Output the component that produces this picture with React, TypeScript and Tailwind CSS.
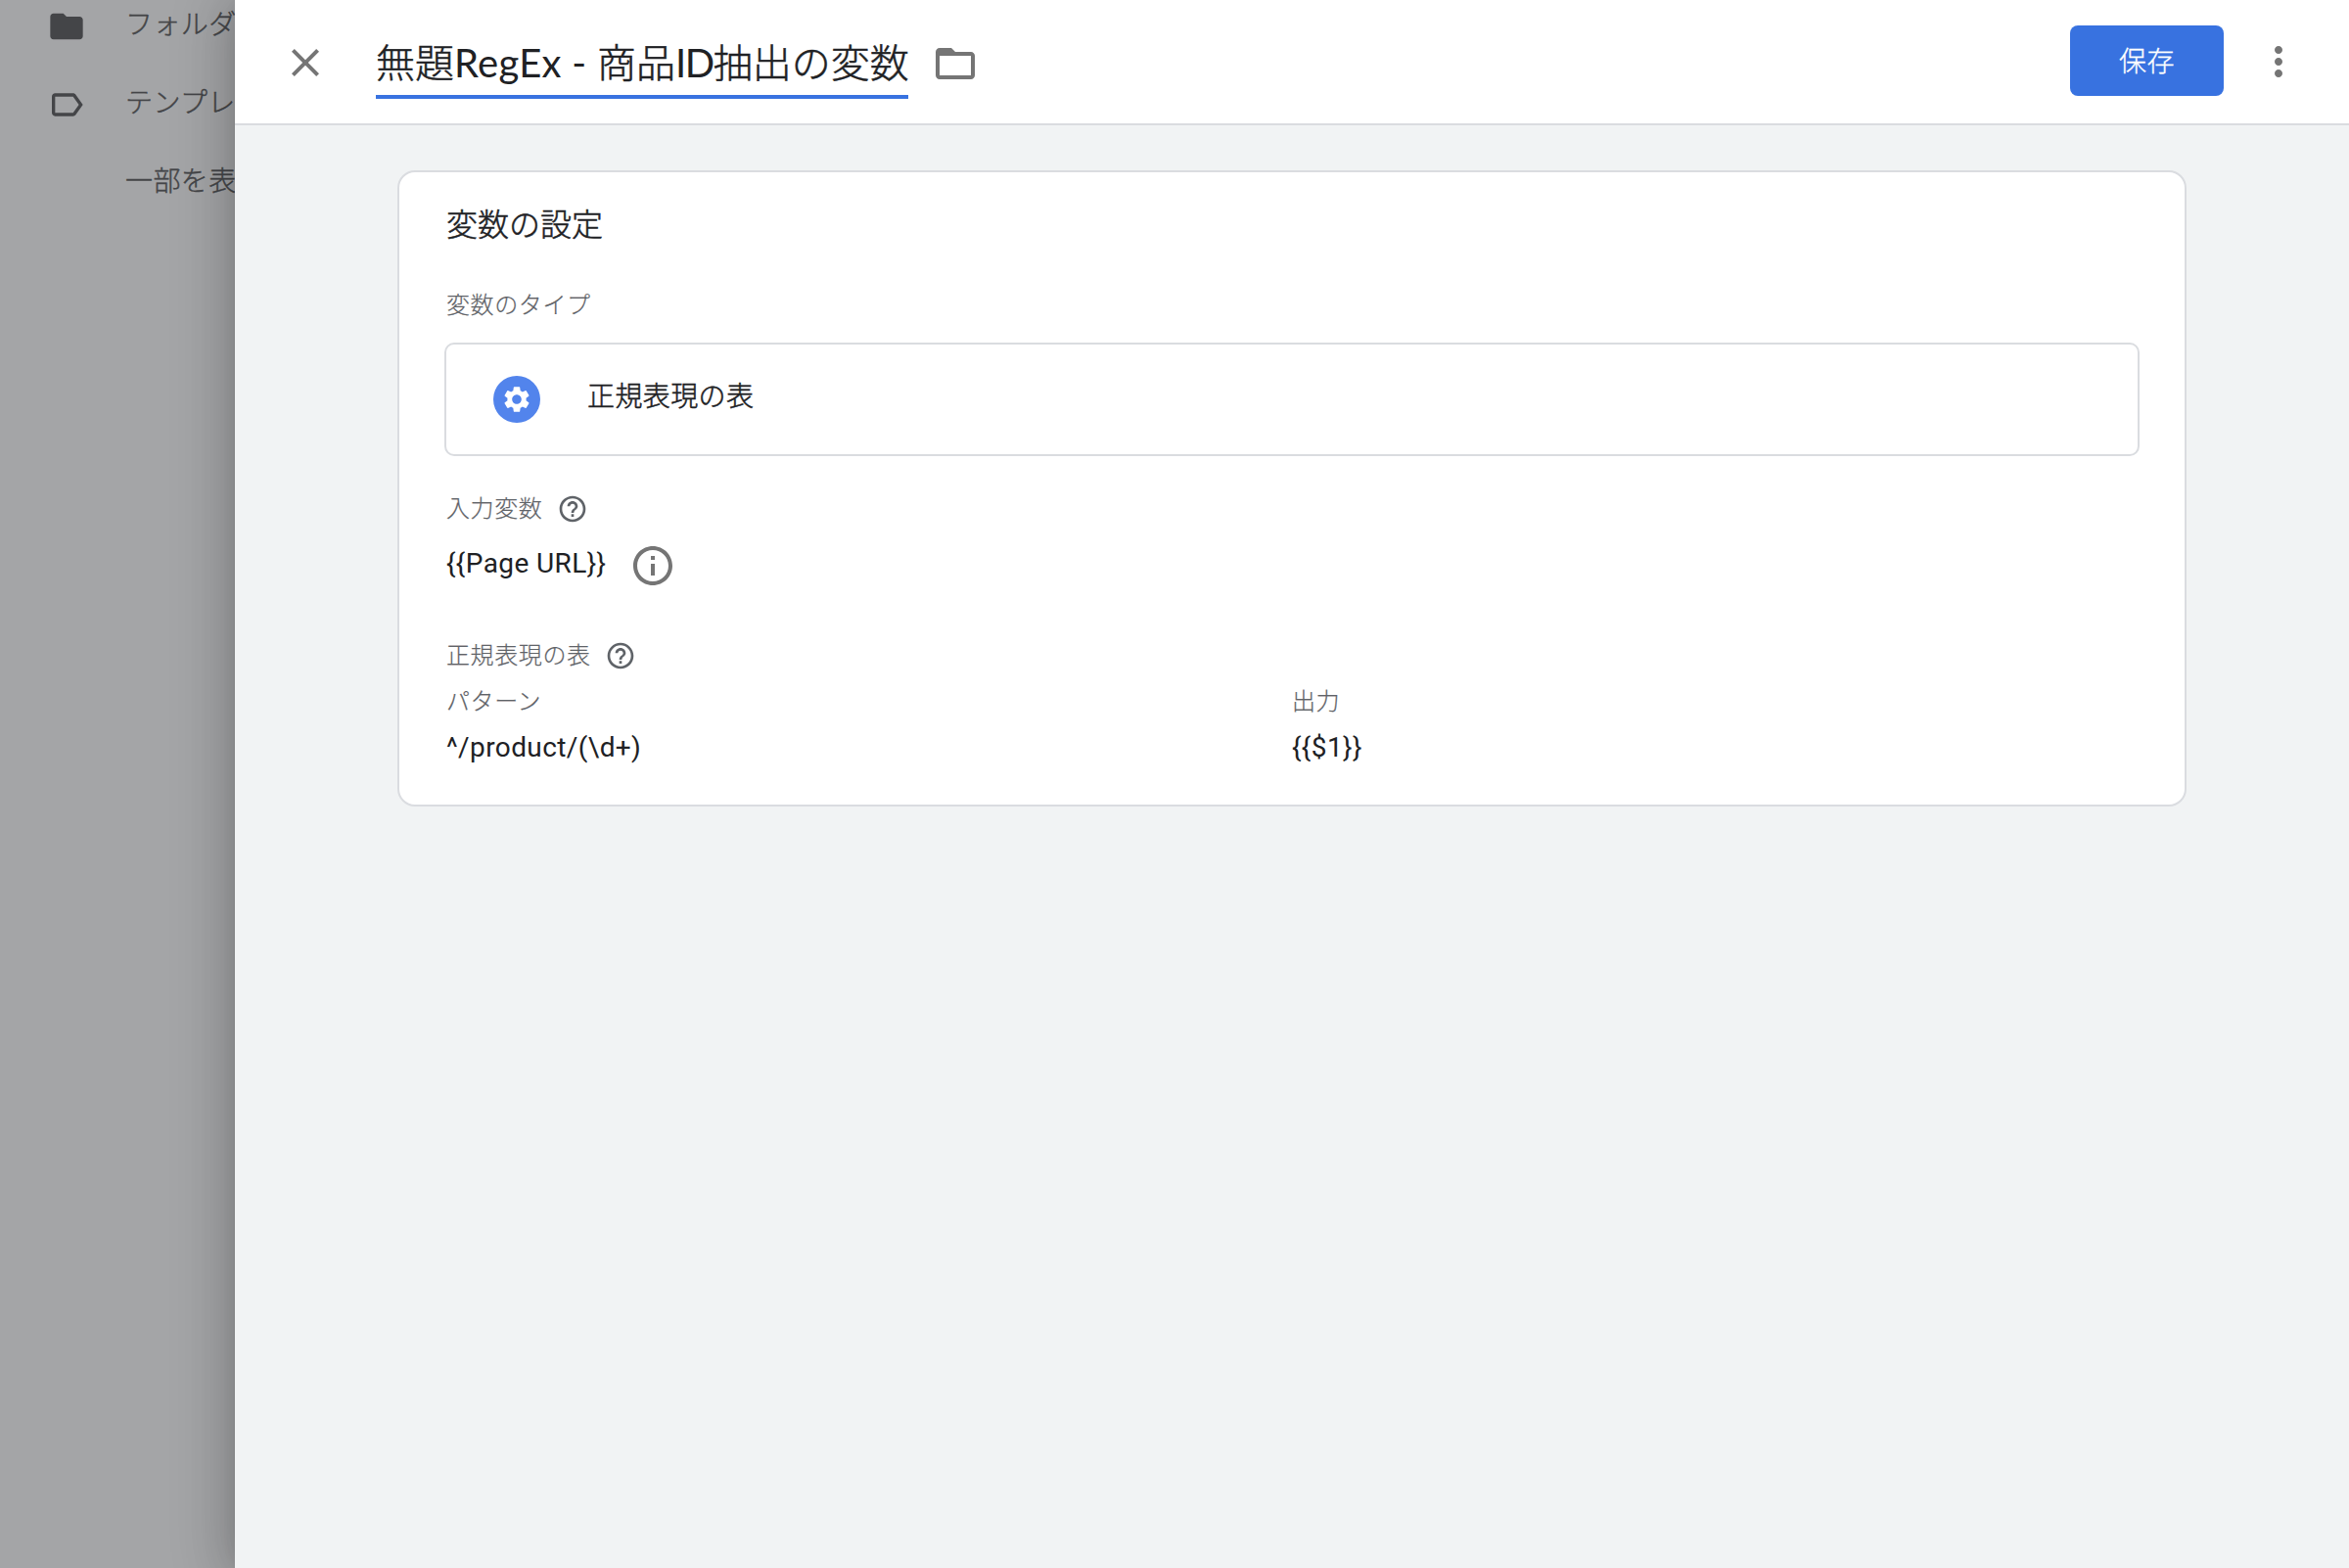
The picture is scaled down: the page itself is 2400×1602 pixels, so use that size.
import type { ReactNode } from 'react'
import {
  MdClose,
  MdFolder,
  MdFolderOpen,
  MdHelpOutline,
  MdInfoOutline,
  MdLabelOutline,
  MdMoreVert,
  MdSettings,
} from 'react-icons/md'

function NavItem({ icon, label }: { icon?: ReactNode; label: string }) {
  return (
    <div className="flex h-20 items-center">
      <span className="flex w-10 shrink-0 justify-center text-[#444548]">{icon}</span>
      <span className="-mt-[3px] ml-10 text-[28px] leading-10 tracking-[0.4px] whitespace-nowrap text-[#444548] [-webkit-text-stroke:0.4px]">{label}</span>
    </div>
  )
}

function Label({ children }: { children: ReactNode }) {
  return <div className="text-[24px] leading-8 tracking-[0.6px] text-[#5f6368] [-webkit-text-stroke:0.2px]">{children}</div>
}

function Value({ children }: { children: ReactNode }) {
  return <div className="text-[28px] leading-10 font-normal tracking-[0.4px]">{children}</div>
}

export default function App() {
  return (
    <div className="flex h-[1602px] w-[2400px] overflow-hidden bg-[#a4a5a7] font-['Roboto','Noto_Sans_CJK_JP',sans-serif] font-light text-[#202124]">
      <aside className="-mt-[13px] w-60 shrink-0 overflow-hidden pl-12">
        <NavItem icon={<MdFolder size={40} />} label="フォルダー" />
        <NavItem icon={<MdLabelOutline size={40} />} label="テンプレート" />
        <NavItem label="一部を表示" />
      </aside>

      <section className="relative flex min-w-0 grow flex-col bg-[#f1f3f4] shadow-[0_0_20px_-10px_rgba(0,0,0,0.2),0_8px_48px_4px_rgba(0,0,0,0.14),0_4px_60px_10px_rgba(0,0,0,0.12)]">
        <header className="flex h-32 shrink-0 items-center border-b-2 border-[#dadce0] bg-white pr-12 pl-12">
          <MdClose size={48} className="mt-0.5 text-[#757575]" />
          <div className="ml-12 flex h-[76px] w-[544px] items-center border-b-4 border-[#3872e0] pt-[7px] whitespace-nowrap">
            <h1 className="text-[40px] leading-[48px] [-webkit-text-stroke:0.5px]">
              無題
              <span className="font-['Lato'] font-normal tracking-[0.3px] [-webkit-text-stroke:0px]">RegEx - </span>
              商品
              <span className="font-['Lato'] font-normal tracking-[-1.5px] [-webkit-text-stroke:0px]">ID</span>
              抽出の変数
            </h1>
          </div>
          <MdFolderOpen size={48} className="mt-[3px] ml-6 text-[#757575]" />
          <button className="mr-8 mb-0.5 ml-auto h-[72px] w-[157px] rounded-lg bg-[#3872e0] pt-[3px] text-[28px] leading-10 tracking-[0.4px] text-white [-webkit-text-stroke:0.3px]">
            保存
          </button>
          <MdMoreVert size={48} className="text-[#757575]" />
        </header>

        <main className="mt-[46px] ml-[166px] flex h-[650px] w-[1828px] flex-col rounded-[18px] border-2 border-[#dadce0] bg-white px-[46px]">
          <h2 className="mt-[34px] pl-0.5 text-[32px] leading-10 [-webkit-text-stroke:0.5px]">変数の設定</h2>
          <div className="mt-[46px] pl-0.5">
            <Label>変数のタイプ</Label>
          </div>
          <div className="mt-[22px] flex h-[116px] items-center rounded-[10px] border-2 border-[#dadce0] pl-12">
            <span className="flex size-12 items-center justify-center rounded-full bg-[#5284ec] text-white">
              <MdSettings size={32} />
            </span>
            <span className="-mt-1 ml-12 text-[28px] leading-10 tracking-[0.4px] [-webkit-text-stroke:0.5px]">
              正規表現の表
            </span>
          </div>

          <div className="mt-[38px] flex h-8 items-center gap-[15px] pl-0.5">
            <Label>入力変数</Label>
            <MdHelpOutline size={32} className="text-[#5f6368]" />
          </div>
          <div className="mt-[18px] flex h-12 items-center gap-6 pl-0.5">
            <div className="mb-1">
              <Value>{'{{Page URL}}'}</Value>
            </div>
            <MdInfoOutline size={48} className="text-[#757575]" />
          </div>

          <div className="mt-[52px] flex h-8 items-center gap-3.5 pl-0.5">
            <Label>正規表現の表</Label>
            <MdHelpOutline size={32} className="text-[#5f6368]" />
          </div>
          <div className="mt-[15px] grid grid-cols-[864px_1fr] pl-0.5">
            <Label>パターン</Label>
            <Label>出力</Label>
          </div>
          <div className="mt-[11px] grid grid-cols-[864px_1fr] pl-0.5">
            <Value>{'^/product/(\\d+)'}</Value>
            <Value>{'{{$1}}'}</Value>
          </div>
        </main>
      </section>
    </div>
  )
}
